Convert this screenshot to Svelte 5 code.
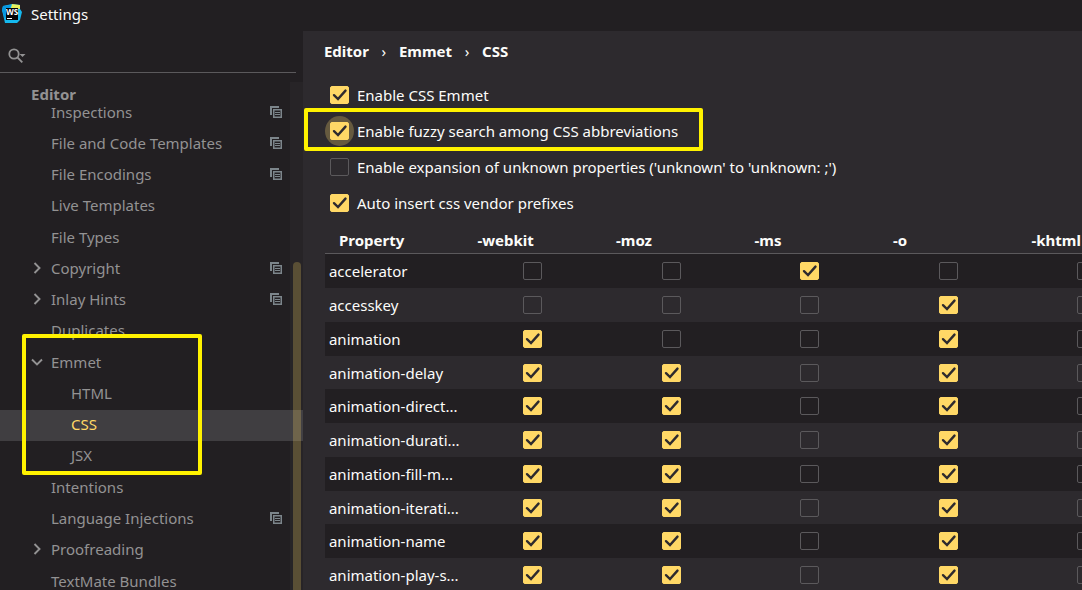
<script>
  const before = [
    { name: 'Inspections', copy: true },
    { name: 'File and Code Templates', copy: true },
    { name: 'File Encodings', copy: true },
    { name: 'Live Templates' },
    { name: 'File Types' },
    { name: 'Copyright', copy: true, arrow: true },
    { name: 'Inlay Hints', copy: true, arrow: true },
    { name: 'Duplicates' }
  ];

  const emmet = ['HTML', 'CSS', 'JSX'];

  const after = [
    { name: 'Intentions' },
    { name: 'Language Injections', copy: true },
    { name: 'Proofreading', arrow: true },
    { name: 'TextMate Bundles' }
  ];

  let selected = $state('CSS');

  let options = $state([
    { id: 'enable', label: 'Enable CSS Emmet', checked: true },
    { id: 'fuzzy', label: 'Enable fuzzy search among CSS abbreviations', checked: true, marked: true },
    { id: 'unknown', label: "Enable expansion of unknown properties ('unknown' to 'unknown: ;')", checked: false },
    { id: 'prefixes', label: 'Auto insert css vendor prefixes', checked: true }
  ]);

  const prefixes = ['-webkit', '-moz', '-ms', '-o', '-khtml'];

  let properties = $state([
    { name: 'accelerator', on: [false, false, true, false, false] },
    { name: 'accesskey', on: [false, false, false, true, false] },
    { name: 'animation', on: [true, false, false, true, false] },
    { name: 'animation-delay', on: [true, true, false, true, false] },
    { name: 'animation-direct...', on: [true, true, false, true, false] },
    { name: 'animation-durati...', on: [true, true, false, true, false] },
    { name: 'animation-fill-m...', on: [true, true, false, true, false] },
    { name: 'animation-iterati...', on: [true, true, false, true, false] },
    { name: 'animation-name', on: [true, true, false, true, false] },
    { name: 'animation-play-s...', on: [true, true, false, true, false] }
  ]);
</script>

{#snippet tick()}
  <svg class="tick" viewBox="0 0 19 18" aria-hidden="true">
    <path d="M4 9.2 L8 13 L15.5 4.6" fill="none" stroke="#2d2a2e" stroke-width="2.4" stroke-linecap="round" />
  </svg>
{/snippet}

{#snippet item(row)}
  <li class="row">
    {#if row.arrow}
      <svg class="arrow" viewBox="0 0 12 12" aria-hidden="true">
        <path d="M3.5 1 L8.5 6 L3.5 11" fill="none" stroke="currentColor" stroke-width="1.9" />
      </svg>
    {/if}
    <button class="name" onclick={() => (selected = row.name)}>{row.name}</button>
    {#if row.copy}
      <svg class="copy" viewBox="0 0 12 12" aria-hidden="true">
        <path d="M0 0 H9 V2 H2 V9 H0 Z" fill="#7c858b" />
        <path d="M3 3 H12 V12 H3 Z M4.5 4.5 V10.5 H10.5 V4.5 Z" fill="#7c858b" fill-rule="evenodd" />
        <path d="M5 6.5 H10 M5 8.5 H10" stroke="#7c858b" stroke-width="1" />
      </svg>
    {/if}
  </li>
{/snippet}

<div class="window">
  <header class="titlebar">
    <svg class="logo" viewBox="0 0 20 20" aria-hidden="true">
      <path d="M1 2 L10 0 L18 1 L18 5 L20 8 L18 16 L15 19 L3 19 L0 6 Z" fill="#15b9ef" />
      <path d="M10 0 L18 1 L18 5 L9 4 Z" fill="#e8f25c" />
      <path d="M1 2 L9 1 L6 8 L3 15 L0 6 Z" fill="#0797e0" />
      <rect x="4" y="4" width="12" height="12" fill="#050505" />
      <rect x="5" y="14" width="5" height="1" fill="#fff" />
      <text x="10" y="10.5" text-anchor="middle" font-size="8" font-weight="700" fill="#fff">WS</text>
    </svg>
    <span>Settings</span>
  </header>

  <div class="body">
    <aside class="sidebar">
      <div class="search">
        <svg viewBox="0 0 18 16" aria-hidden="true">
          <circle cx="6" cy="6" r="4.7" fill="none" stroke="#939293" stroke-width="1.8" />
          <path d="M9.4 9.4 L14.3 14.3" stroke="#939293" stroke-width="1.9" />
          <path d="M11.5 6 H17.5 L14.5 9 Z" fill="#939293" />
        </svg>
        <input type="text" aria-label="Search settings" />
      </div>

      <div class="tree">
        <h2>Editor</h2>
        <div class="clip">
          <ul>
            {#each before as row}
              {@render item(row)}
            {/each}
            <li class="group">
              <div class="row">
                <svg class="arrow" viewBox="0 0 12 12" aria-hidden="true">
                  <path d="M1 3.5 L6 8.5 L11 3.5" fill="none" stroke="currentColor" stroke-width="1.9" />
                </svg>
                <button class="name">Emmet</button>
              </div>
              {#each emmet as name}
                <div class="row child" class:selected={selected === name}>
                  <button class="name" onclick={() => (selected = name)}>{name}</button>
                </div>
              {/each}
              <span class="mark"></span>
            </li>
            {#each after as row}
              {@render item(row)}
            {/each}
          </ul>
        </div>
        <div class="track"><div class="thumb"></div></div>
      </div>
    </aside>

    <main>
      <nav class="crumbs">
        <span>Editor</span><i>›</i><span>Emmet</span><i>›</i><span>CSS</span>
      </nav>

      <div class="options">
        {#each options as option}
          <div class="option">
            <span class="check" class:halo={option.marked}>
              <input id={option.id} type="checkbox" bind:checked={option.checked} />
              {@render tick()}
            </span>
            <label for={option.id}>{option.label}</label>
            {#if option.marked}
              <span class="mark"></span>
            {/if}
          </div>
        {/each}
      </div>

      <div class="table-wrap">
        <table>
          <thead>
            <tr>
              <th>Property</th>
              {#each prefixes as prefix}
                <th>{prefix}</th>
              {/each}
            </tr>
          </thead>
          <tbody>
            {#each properties as property}
              <tr>
                <td>{property.name}</td>
                {#each prefixes as prefix, i}
                  <td>
                    <span class="check">
                      <input type="checkbox" aria-label="{property.name} {prefix}" bind:checked={property.on[i]} />
                      {@render tick()}
                    </span>
                  </td>
                {/each}
              </tr>
            {/each}
          </tbody>
        </table>
      </div>
    </main>
  </div>
</div>

<style>
  :global(body) {
    background: #221f22;
  }

  .window {
    display: flex;
    flex-direction: column;
    height: 100vh;
    overflow: hidden;
    background: #221f22;
    color: #fcfcfa;
    font-family: "Noto Sans", "Open Sans", sans-serif;
    font-size: 15px;
    line-height: 20px;
  }

  .titlebar {
    display: flex;
    box-sizing: border-box;
    flex: none;
    align-items: center;
    gap: 9px;
    height: 31px;
    padding: 0 2px 4px;
  }

  .logo {
    width: 20px;
    height: 20px;
  }

  .body {
    display: flex;
    flex: 1;
    min-height: 0;
  }

  .sidebar {
    display: flex;
    flex: none;
    flex-direction: column;
    width: 28%;
    color: #939293;
  }

  .search {
    display: flex;
    flex: none;
    align-items: center;
    gap: 4px;
    height: 33px;
    margin-right: 7px;
    padding: 8px 0 0 8px;
    border-bottom: 1px solid #5b595c;
  }

  .search svg {
    width: 18px;
    height: 16px;
  }

  .search input {
    flex: 1;
    min-width: 0;
    border: 0;
    outline: 0;
    background: transparent;
    color: #fcfcfa;
    font: inherit;
  }

  .tree {
    display: flex;
    position: relative;
    flex: 1;
    flex-direction: column;
    min-height: 0;
    padding-top: 10px;
  }

  h2 {
    flex: none;
    margin: 0;
    padding-left: 31px;
    font-size: 15px;
    line-height: 22px;
  }

  .clip {
    flex: 1;
    min-height: 0;
    overflow: hidden;
  }

  ul {
    margin: -7px 0 0;
    padding: 0;
    list-style: none;
  }

  .row {
    display: flex;
    position: relative;
    box-sizing: border-box;
    align-items: center;
    height: 31px;
    padding: 0 21px 4px 51px;
  }

  .row:nth-child(4n) {
    height: 32px;
  }

  .row.child {
    padding-left: 71px;
  }

  .selected {
    background: #403e41;
  }

  .selected .name {
    color: #ffd866;
  }

  .name {
    flex: 1;
    padding: 0;
    border: 0;
    background: none;
    color: inherit;
    font: inherit;
    text-align: left;
    white-space: nowrap;
  }

  .arrow {
    width: 12px;
    height: 12px;
    margin: 0 8px 0 -20px;
  }

  .copy {
    width: 12px;
    height: 12px;
  }

  .group {
    position: relative;
  }

  .mark {
    position: absolute;
    box-sizing: border-box;
    border: 4px solid #fff200;
    border-radius: 2px;
    pointer-events: none;
  }

  .group .mark {
    top: -14px;
    bottom: -2px;
    left: 22px;
    width: 180px;
  }

  .track {
    position: absolute;
    top: 9px;
    right: 0;
    bottom: 0;
    width: 13px;
    background: rgba(90, 85, 90, 0.1);
  }

  .thumb {
    height: 100%;
    margin: 180px 2px 0 3px;
    border-radius: 4px 4px 0 0;
    background: rgba(255, 216, 102, 0.24);
  }

  main {
    flex: 1;
    min-width: 0;
    overflow: hidden;
    background: #2d2a2e;
  }

  .crumbs {
    display: flex;
    padding: 10px 21px 0;
    font-weight: 700;
  }

  .crumbs i {
    width: 30px;
    font-style: normal;
    font-weight: 400;
    text-align: center;
  }

  .options {
    padding: 16px 0 0 27px;
  }

  .option {
    display: flex;
    position: relative;
    align-items: center;
    gap: 8px;
    height: 36px;
  }

  .option .mark {
    top: -5px;
    left: -26px;
    width: 399px;
    height: 43px;
  }

  .check {
    display: inline-block;
    position: relative;
    flex: none;
    width: 19px;
    height: 18px;
  }

  .check input {
    position: relative;
    box-sizing: border-box;
    display: block;
    width: 100%;
    height: 100%;
    margin: 0;
    appearance: none;
    border: 1px solid #5b595c;
    border-radius: 2px;
  }

  .check input:checked {
    border-color: #ffd866;
    background: #ffd866;
  }

  .halo::before {
    content: '';
    position: absolute;
    inset: -6px -5px;
    border-radius: 50%;
    background: #665a3f;
  }

  .tick {
    display: none;
    position: absolute;
    inset: 0;
    pointer-events: none;
  }

  input:checked + .tick {
    display: block;
  }

  .table-wrap {
    margin-left: 22px;
    padding-top: 6px;
    overflow: hidden;
  }

  table {
    width: 831px;
    table-layout: fixed;
    border-collapse: collapse;
  }

  th {
    height: 26px;
    padding: 0 14px;
    border-bottom: 1px solid #5b595c;
    text-align: left;
  }

  td {
    height: 34px;
    padding: 0;
    text-align: center;
    vertical-align: middle;
    white-space: nowrap;
  }

  td:first-child {
    padding-left: 4px;
    text-align: left;
  }

  td .check {
    display: block;
    margin: 0 auto;
  }

  tbody tr:nth-child(4n) td {
    height: 33px;
  }

  tbody tr:nth-child(odd) {
    background: #221f22;
  }
</style>
